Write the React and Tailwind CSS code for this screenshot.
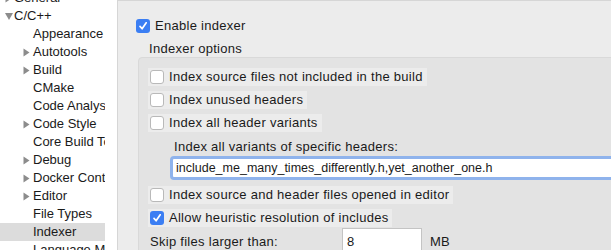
const font = { fontFamily: '"Liberation Sans", Arial, sans-serif' };

const tree = [
  { label: "General", level: 0, arrow: "right" },
  { label: "C/C++", level: 0, arrow: "down" },
  { label: "Appearance", level: 1 },
  { label: "Autotools", level: 1, arrow: "right" },
  { label: "Build", level: 1, arrow: "right" },
  { label: "CMake", level: 1 },
  { label: "Code Analysis", level: 1 },
  { label: "Code Style", level: 1, arrow: "right" },
  { label: "Core Build Toolchains", level: 1 },
  { label: "Debug", level: 1, arrow: "right" },
  { label: "Docker Containers", level: 1, arrow: "right" },
  { label: "Editor", level: 1, arrow: "right" },
  { label: "File Types", level: 1 },
  { label: "Indexer", level: 1, selected: true },
  { label: "Language Mappings", level: 1 },
];

function Arrow({ down }) {
  if (down) {
    return (
      <svg width="8" height="7" viewBox="0 0 8 7">
        <path d="M0 0H8L4 7Z" fill="#8c8c8c" />
      </svg>
    );
  }
  return (
    <svg width="7" height="9" viewBox="0 0 7 9">
      <path d="M0.5 0.5L6.5 4.5L0.5 8.5Z" fill="#8c8c8c" />
    </svg>
  );
}

function Checkbox({ checked }) {
  if (checked) {
    return (
      <span className="flex h-[14px] w-[14px] shrink-0 items-center justify-center rounded-[3px] bg-[#3b7ef3]">
        <svg width="10" height="10" viewBox="0 0 10 10">
          <path d="M2 5.4L4.1 7.8L8.2 1.8" fill="none" stroke="#fff" strokeWidth="1.7" strokeLinecap="round" strokeLinejoin="round" />
        </svg>
      </span>
    );
  }
  return <span className="h-[14px] w-[14px] shrink-0 rounded-[3px] border border-[#b9b9b9] bg-white" />;
}

function CheckRow({ label, checked }) {
  return (
    <div className="flex h-[18px] items-center gap-[5px] self-start bg-[#ececec] pl-[2px] pr-[4px]">
      <Checkbox checked={checked} />
      <span className="whitespace-nowrap">{label}</span>
    </div>
  );
}

export default function App() {
  return (
    <div className="flex h-[250px] w-[611px] overflow-hidden bg-white text-[13px] text-[#1a1a1a]" style={font}>
      {/* preference tree */}
      <div className="w-[117px] shrink-0 bg-white">
        <div className="mt-[-11px] w-[105px] overflow-hidden">
          {tree.map((item) => (
            <div
              key={item.label}
              className={`flex h-[18px] items-center whitespace-nowrap ${item.selected ? "bg-[#dcdcdc]" : ""}`}
            >
              <span className={`flex shrink-0 items-center ${item.level === 0 ? "w-[14px] pl-[5px]" : "w-[33px] pl-[23px]"}`}>
                {item.arrow && <Arrow down={item.arrow === "down"} />}
              </span>
              <span>{item.label}</span>
            </div>
          ))}
        </div>
      </div>

      {/* page */}
      <div className="flex-1 overflow-hidden border-l border-t border-[#d6d6d6] bg-[#ececec] tracking-[0.28px]">
        <div className="mt-[16px] flex h-[18px] items-center gap-[5px] pl-[18px]">
          <Checkbox checked />
          <span>Enable indexer</span>
        </div>
        <div className="mt-[6px] flex h-[16px] items-center pl-[31px]">Indexer options</div>
        <div className="ml-[20px] flex w-[520px] flex-col rounded-[4px] border border-[#d9d9d9] bg-[#e3e3e3] pl-[9px] pt-[10px] pb-[10px]">
          <CheckRow label="Index source files not included in the build" />
          <div className="mt-[5px] flex flex-col">
            <CheckRow label="Index unused headers" />
          </div>
          <div className="mt-[5px] flex flex-col">
            <CheckRow label="Index all header variants" />
          </div>
          <div className="ml-[26px] mt-[6px] flex h-[18px] items-center">Index all variants of specific headers:</div>
          <div className="ml-[22px] flex h-[24px] items-center rounded-[4px] border-[3px] border-[#8fb3ec] bg-white pl-[3px] text-[12.5px] tracking-normal">
            include_me_many_times_differently.h,yet_another_one.h
          </div>
          <div className="mt-[6px] flex flex-col">
            <CheckRow label="Index source and header files opened in editor" />
          </div>
          <div className="mt-[5px] flex flex-col">
            <CheckRow label="Allow heuristic resolution of includes" checked />
          </div>
          <div className="mt-px flex h-[28px] items-center">
            <span className="w-[194px] pl-[2px]">Skip files larger than:</span>
            <div className="flex h-[28px] w-[80px] items-center border border-[#c4c4c4] bg-white pl-[4px]">8</div>
            <span className="ml-[8px]">MB</span>
          </div>
        </div>
      </div>
    </div>
  );
}
